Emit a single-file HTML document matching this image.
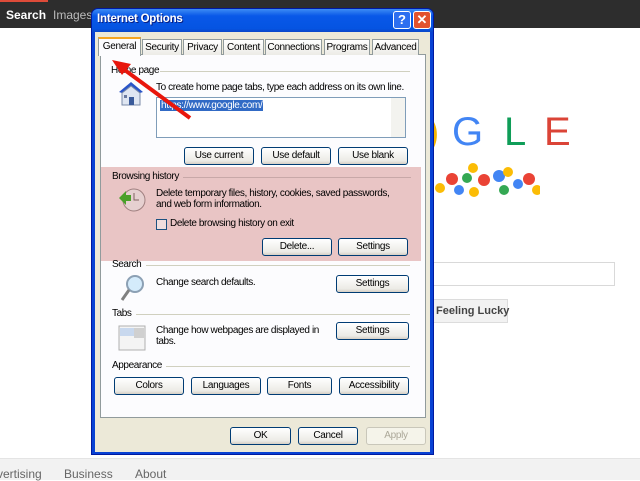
<!DOCTYPE html>
<html><head><style>
*{margin:0;padding:0;box-sizing:border-box}
body{width:640px;height:480px;position:relative;overflow:hidden;background:#fff;font-family:"Liberation Sans",sans-serif;font-size:11px;color:#000}
.a{position:absolute}
.btn{position:absolute;height:18px;border:1px solid #003c74;border-radius:3px;background:linear-gradient(#fff,#ecebe6 80%,#d6d0c5);text-align:center;line-height:16px;font-size:10px;letter-spacing:-0.3px;white-space:nowrap}
.tab{position:absolute;top:39px;height:16px;border:1px solid #919b9c;border-bottom:none;background:linear-gradient(#fff,#ecebe6);text-align:center;font-size:10px;letter-spacing:-0.3px;line-height:15px;white-space:nowrap}
.gl{position:absolute;font-size:10px;letter-spacing:-0.4px;white-space:nowrap}
.line{position:absolute;height:1px;background:#d0d0bf}
.lt{position:absolute;font-family:"Liberation Sans",sans-serif;font-size:40px;font-weight:normal}
</style></head><body>
<div class="a" style="left:0;top:0;width:640px;height:28px;background:#2d2d2d"></div>
<div class="a" style="left:0;top:0;width:48px;height:2px;background:#dd4b39"></div>
<div class="a" style="left:6px;top:8px;color:#fff;font-weight:bold;font-size:12px">Search</div>
<div class="a" style="left:53px;top:8px;color:#bbb;font-size:12px">Images</div>
<div class="a" style="left:0;top:458px;width:640px;height:22px;background:#f2f2f2;border-top:1px solid #e4e4e4"></div>
<div class="a" style="left:-3px;top:467px;color:#666;font-size:12px">vertising</div>
<div class="a" style="left:64px;top:467px;color:#666;font-size:12px">Business</div>
<div class="a" style="left:135px;top:467px;color:#666;font-size:12px">About</div>
<div class="lt" style="left:426px;top:110px;color:#f4b400">)</div>
<div class="lt" style="left:452px;top:110px;color:#4285f4">G</div>
<div class="lt" style="left:504px;top:110px;color:#0f9d58">L</div>
<div class="lt" style="left:544px;top:110px;color:#db4437">E</div>
<svg class="a" style="left:430px;top:160px" width="110" height="50">
<circle cx="10" cy="28" r="5" fill="#fbbc05"/><circle cx="22" cy="19" r="6" fill="#ea4335"/><circle cx="29" cy="30" r="5" fill="#4285f4"/><circle cx="37" cy="18" r="5" fill="#34a853"/><circle cx="43" cy="8" r="5" fill="#fbbc05"/><circle cx="44" cy="32" r="5" fill="#fbbc05"/><circle cx="54" cy="20" r="6" fill="#ea4335"/><circle cx="69" cy="16" r="6" fill="#4285f4"/><circle cx="78" cy="12" r="5" fill="#fbbc05"/><circle cx="74" cy="30" r="5" fill="#34a853"/><circle cx="88" cy="24" r="5" fill="#4285f4"/><circle cx="99" cy="19" r="6" fill="#ea4335"/><circle cx="107" cy="30" r="5" fill="#fbbc05"/>
</svg>
<div class="a" style="left:420px;top:262px;width:195px;height:24px;border:1px solid #d9d9d9;border-left:none"></div>
<div class="a" style="left:420px;top:299px;width:88px;height:24px;background:#f2f2f2;border:1px solid #dcdcdc;font-weight:bold;font-size:11px;color:#444;line-height:22px;padding-left:15px;white-space:nowrap">Feeling Lucky</div>

<div class="a" style="left:91px;top:8px;width:343px;height:447px;background:#0842d4;border-radius:7px 7px 0 0;border:1px solid #0019a0"></div>
<div class="a" style="left:92px;top:9px;width:341px;height:23px;border-radius:6px 6px 0 0;background:linear-gradient(#3d8cf5,#0958e8 30%,#0554e2 85%,#0a47c8)"></div>
<div class="a" style="left:97px;top:13px;color:#fff;font-weight:bold;font-size:11.5px;letter-spacing:-0.2px;text-shadow:1px 1px #0a1e80">Internet Options</div>
<div class="a" style="left:393px;top:11px;width:18px;height:18px;border:1px solid #fff;border-radius:3px;background:#2d6ff0;color:#fff;font-weight:bold;text-align:center;line-height:16px;font-size:13px">?</div>
<div class="a" style="left:413px;top:11px;width:18px;height:18px;border:1px solid #fff;border-radius:3px;background:#e2522e;color:#fff;font-weight:bold;text-align:center;line-height:16px;font-size:13px">✕</div>
<div class="a" style="left:95px;top:32px;width:335px;height:420px;background:#ece9d8"></div>
<div class="a" style="left:100px;top:54px;width:326px;height:364px;background:#fcfcfe;border:1px solid #919b9c"></div>
<div class="tab" style="left:142px;width:40px">Security</div>
<div class="tab" style="left:183px;width:39px">Privacy</div>
<div class="tab" style="left:223px;width:41px">Content</div>
<div class="tab" style="left:265px;width:57px">Connections</div>
<div class="tab" style="left:324px;width:46px">Programs</div>
<div class="tab" style="left:372px;width:47px">Advanced</div>
<div class="tab" style="left:98px;top:37px;height:19px;width:43px;background:#fcfcfe;border-top:2px solid #f5a623">General</div>

<div class="gl" style="left:111px;top:65px">Home page</div><div class="line" style="left:160px;top:71px;width:250px"></div>
<svg class="a" style="left:117px;top:80px" width="28" height="26"><path d="M2 12 L14 2 L26 12 L23 13 L14 6 L5 13Z" fill="#2a55c8"/><path d="M5 13 L14 6 L23 13 V25 H5Z" fill="#dfe6f2" stroke="#7a8aa8"/><rect x="12" y="17" width="5" height="8" fill="#3a5a9a"/><rect x="7" y="15" width="3" height="3" fill="#6a7aa0"/></svg>
<div class="gl" style="left:156px;top:82px">To create home page tabs, type each address on its own line.</div>
<div class="a" style="left:156px;top:97px;width:250px;height:41px;background:#fff;border:1px solid #7f9db9"></div>
<div class="a" style="left:160px;top:100px;background:#316ac5;color:#fff;font-size:10px;letter-spacing:-0.3px;padding:0 1px">https://www.google.com/</div>
<div class="a" style="left:391px;top:98px;width:14px;height:39px;background:#f3f3ef"></div>
<div class="btn" style="left:184px;top:147px;width:70px">Use current</div>
<div class="btn" style="left:261px;top:147px;width:70px">Use default</div>
<div class="btn" style="left:338px;top:147px;width:70px">Use blank</div>

<div class="a" style="left:101px;top:167px;width:320px;height:94px;background:#e9c5c5"></div>
<div class="gl" style="left:112px;top:171px">Browsing history</div><div class="line" style="left:183px;top:177px;width:228px;background:#c8a8a8"></div>
<svg class="a" style="left:117px;top:186px" width="30" height="28"><circle cx="17" cy="14" r="11" fill="#e6d0d0" stroke="#a08080"/><path d="M17 7V14H22" stroke="#806060" fill="none"/><path d="M2 12 L9 5 L9 9 L14 9 L14 15 L9 15 L9 19Z" fill="#4aa02a"/></svg>
<div class="gl" style="left:156px;top:188px">Delete temporary files, history, cookies, saved passwords,</div>
<div class="gl" style="left:156px;top:199px">and web form information.</div>
<div class="a" style="left:156px;top:219px;width:11px;height:11px;border:1px solid #1c5180;background:#f0dede"></div>
<div class="gl" style="left:170px;top:218px">Delete browsing history on exit</div>
<div class="btn" style="left:262px;top:238px;width:70px">Delete...</div>
<div class="btn" style="left:338px;top:238px;width:70px">Settings</div>

<div class="gl" style="left:112px;top:259px">Search</div><div class="line" style="left:146px;top:265px;width:264px"></div>
<svg class="a" style="left:119px;top:273px" width="28" height="30"><circle cx="16" cy="11" r="8" fill="#d4ebfb" stroke="#8ca0b4" stroke-width="2"/><path d="M10 17 L3 27" stroke="#808080" stroke-width="3"/></svg>
<div class="gl" style="left:156px;top:277px">Change search defaults.</div>
<div class="btn" style="left:336px;top:275px;width:73px">Settings</div>

<div class="gl" style="left:112px;top:308px">Tabs</div><div class="line" style="left:136px;top:314px;width:274px"></div>
<svg class="a" style="left:118px;top:325px" width="28" height="26"><rect x="1" y="1" width="26" height="24" fill="#f4f4f4" stroke="#b0b0b0"/><rect x="2" y="3" width="14" height="8" fill="#c8d8ee"/><rect x="16" y="3" width="10" height="10" fill="#d0d0d0"/></svg>
<div class="gl" style="left:156px;top:325px">Change how webpages are displayed in</div>
<div class="gl" style="left:156px;top:336px">tabs.</div>
<div class="btn" style="left:336px;top:322px;width:73px">Settings</div>

<div class="gl" style="left:112px;top:360px">Appearance</div><div class="line" style="left:166px;top:366px;width:244px"></div>
<div class="btn" style="left:114px;top:377px;width:70px">Colors</div>
<div class="btn" style="left:191px;top:377px;width:70px">Languages</div>
<div class="btn" style="left:267px;top:377px;width:65px">Fonts</div>
<div class="btn" style="left:339px;top:377px;width:70px">Accessibility</div>

<div class="btn" style="left:230px;top:427px;width:61px">OK</div>
<div class="btn" style="left:298px;top:427px;width:60px">Cancel</div>
<div class="btn" style="left:366px;top:427px;width:60px;border-color:#c9c7ba;background:#f5f4ea;color:#aca899">Apply</div>

<svg class="a" style="left:0;top:0" width="640" height="480"><path d="M190 118 L122 68" stroke="#e8160c" stroke-width="4"/><path d="M112 60 L131 64 L122 75Z" fill="#e8160c"/></svg>
</body></html>
